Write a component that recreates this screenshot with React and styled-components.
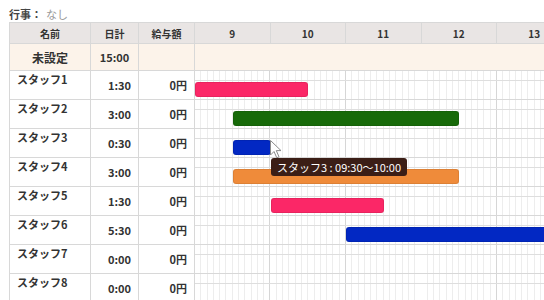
import React from "react";
import styled, { createGlobalStyle } from "styled-components";

const HOUR = 75.5;
const START_HOUR = 9;
const hours = [9, 10, 11, 12, 13];

const staff = [
  { name: "スタッフ1", total: "1:30", pay: "0円", bar: { from: 9, to: 10.5, color: "#fb2767" } },
  { name: "スタッフ2", total: "3:00", pay: "0円", bar: { from: 9.5, to: 12.5, color: "#176a09" } },
  { name: "スタッフ3", total: "0:30", pay: "0円", bar: { from: 9.5, to: 10, color: "#0228c3" } },
  { name: "スタッフ4", total: "3:00", pay: "0円", bar: { from: 9.5, to: 12.5, color: "#ef8b3a" } },
  { name: "スタッフ5", total: "1:30", pay: "0円", bar: { from: 10, to: 11.5, color: "#fb2767" } },
  { name: "スタッフ6", total: "5:30", pay: "0円", bar: { from: 11, to: 16.5, color: "#0228c3" } },
  { name: "スタッフ7", total: "0:00", pay: "0円" },
  { name: "スタッフ8", total: "0:00", pay: "0円" },
];

const GlobalStyle = createGlobalStyle`
  body {
    margin: 0;
    background: #fff;
    font-family: "Noto Sans CJK JP", "Noto Sans", sans-serif;
    color: #333;
    overflow: hidden;
  }
`;

const Page = styled.div`
  position: relative;
  width: 544px;
  height: 300px;
  overflow: hidden;
  box-sizing: border-box;
  padding: 6px 0 0 9px;
`;

const EventLine = styled.div`
  display: flex;
  gap: 4px;
  height: 16px;
  font-size: 11px;
  line-height: 16px;
`;

const EventLabel = styled.span`
  font-weight: bold;
  color: #444;
`;

const EventValue = styled.span`
  color: #999;
`;

const Table = styled.div`
  width: max-content;
  border-top: 1px solid #d8d8d8;
  border-left: 1px solid #d8d8d8;
`;

const Row = styled.div`
  display: flex;
  height: ${(p) => p.$h}px;
  background: ${(p) => p.$bg || "#fff"};
`;

const Cell = styled.div`
  flex-shrink: 0;
  box-sizing: border-box;
  width: ${(p) => p.$w}px;
  border-right: 1px solid #d8d8d8;
  border-bottom: 1px solid #d8d8d8;
  display: flex;
  align-items: center;
  justify-content: ${(p) => p.$align || "center"};
  padding: 0 ${(p) => (p.$align === "flex-end" ? 7 : 0)}px;
  font-size: ${(p) => p.$size || 11}px;
  font-weight: bold;
  color: #333;
`;

const NameCell = styled(Cell)`
  align-items: flex-start;
  justify-content: flex-start;
  padding: 1px 7px;
  line-height: 14px;
`;

const HourCell = styled(Cell)`
  width: ${HOUR}px;
  font-size: 10px;
`;

const Timeline = styled.div`
  position: relative;
  overflow: hidden;
  flex-shrink: 0;
  width: ${hours.length * HOUR}px;
  box-sizing: border-box;
  border-bottom: 1px solid #d8d8d8;
  background-image: ${(p) =>
    p.$plain
      ? "none"
      : `repeating-linear-gradient(to right, transparent 0 ${HOUR - 1}px, #d6d6d6 ${HOUR - 1}px ${HOUR}px),
         repeating-linear-gradient(to right, transparent 0 ${HOUR / 12 - 1}px, #ededed ${HOUR / 12 - 1}px ${HOUR / 12}px)`};
`;

const TopBand = styled.div`
  height: 9px;
  border-bottom: 1px solid #dedede;
`;

const Bar = styled.div`
  position: absolute;
  top: 11px;
  height: 15px;
  border-radius: 3px;
  box-sizing: border-box;
  border: 1px solid rgba(0, 0, 0, 0.08);
  background: ${(p) => p.$color};
`;

const Tooltip = styled.div`
  position: absolute;
  left: 271px;
  top: 158px;
  z-index: 3;
  height: 18px;
  padding: 0 6px;
  border-radius: 3px;
  background: #3b1e16;
  color: #fff;
  font-size: 11px;
  line-height: 18px;
  white-space: nowrap;
`;

const Cursor = styled.svg`
  position: absolute;
  left: 270px;
  top: 140px;
  z-index: 2;
`;

export default function App() {
  return (
    <>
      <GlobalStyle />
      <Page>
        <EventLine>
          <EventLabel>行事：</EventLabel>
          <EventValue>なし</EventValue>
        </EventLine>
        <Table>
          <Row $h={21} $bg="#e9e5e4">
            <Cell $w={81} $size={10}>名前</Cell>
            <Cell $w={48} $size={10}>日計</Cell>
            <Cell $w={56} $size={10}>給与額</Cell>
            {hours.map((h) => (
              <HourCell key={h}>{h}</HourCell>
            ))}
          </Row>
          <Row $h={27} $bg="#fcf3ea">
            <Cell $w={81} $size={12}>未設定</Cell>
            <Cell $w={48}>15:00</Cell>
            <Cell $w={56} />
            <Timeline $plain />
          </Row>
          {staff.map((s) => (
            <Row key={s.name} $h={29}>
              <NameCell $w={81}>{s.name}</NameCell>
              <Cell $w={48} $align="flex-end">{s.total}</Cell>
              <Cell $w={56} $align="flex-end">{s.pay}</Cell>
              <Timeline>
                <TopBand />
                {s.bar && (
                  <Bar
                    $color={s.bar.color}
                    style={{
                      left: (s.bar.from - START_HOUR) * HOUR,
                      width: (s.bar.to - s.bar.from) * HOUR,
                    }}
                  />
                )}
              </Timeline>
            </Row>
          ))}
        </Table>
        <Cursor width="12" height="19" viewBox="0 0 12 19">
          <path d="M0.5 0.5 L0.5 15 L4 11.5 L6.8 17.8 L9 16.8 L6.3 10.6 L11 10.6 Z" fill="#fff" stroke="#8a8a8a" strokeWidth="1" />
        </Cursor>
        <Tooltip>スタッフ3 : 09:30～10:00</Tooltip>
      </Page>
    </>
  );
}
